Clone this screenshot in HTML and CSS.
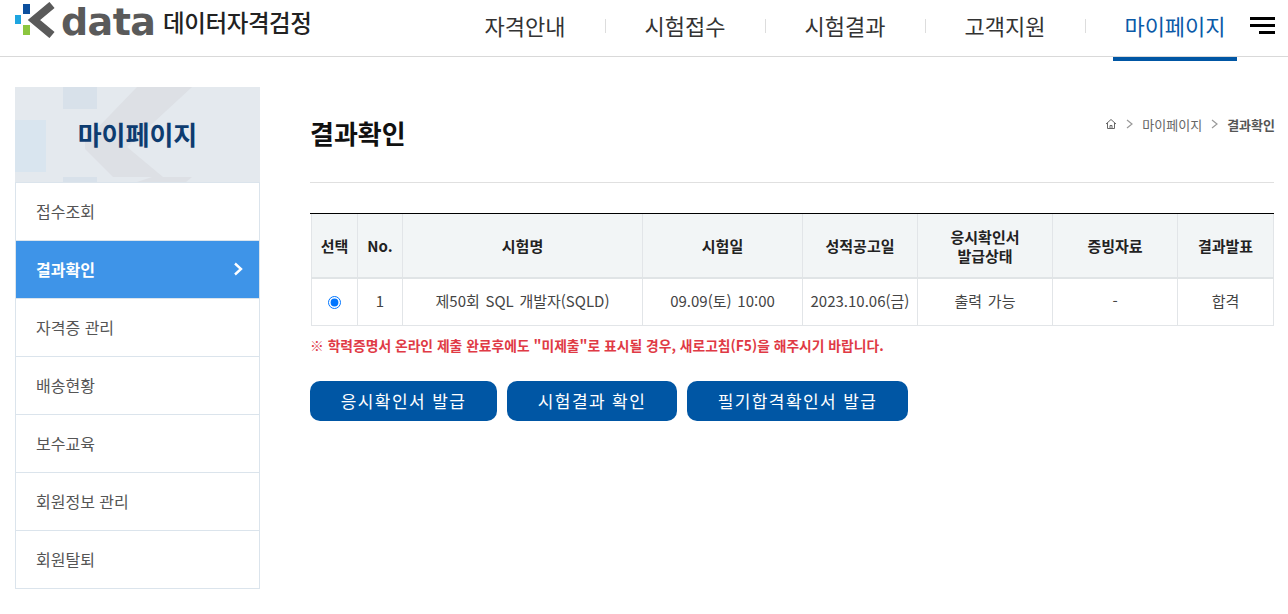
FILE: index.html
```html
<!DOCTYPE html>
<html lang="ko">
<head>
    <meta charset="UTF-8">
    <title>결과확인 - 데이터자격검정</title>
    <link rel="stylesheet" href="styles.css">
</head>
<body>
    <header class="top">
        <a class="logo" href="#">
            <svg class="logo-mark" width="42" height="36" viewBox="0 0 42 36">
                <rect x="8" y="2" width="7" height="10" fill="#0b4f9e"/>
                <rect x="0" y="13" width="6" height="9" fill="#1ea5e0"/>
                <rect x="8" y="23" width="7" height="10" fill="#8cc63f"/>
                <polyline points="37,3 19,18 37,33" fill="none" stroke="#5a5a5a" stroke-width="8"/>
            </svg>
            <span class="logo-data">data</span>
            <span class="logo-name">데이터자격검정</span>
        </a>
        <nav class="gnb">
            <a href="#">자격안내</a>
            <a href="#">시험접수</a>
            <a href="#">시험결과</a>
            <a href="#">고객지원</a>
            <a href="#" class="on">마이페이지</a>
        </nav>
        <button class="menu-btn" aria-label="menu"><span></span><span></span><span></span></button>
    </header>

    <div class="wrap">
        <!-- left menu -->
        <aside class="side">
            <div class="side-title">
                <svg class="side-bg" width="245" height="95" viewBox="0 0 245 95">
                    <rect x="48" y="0" width="34" height="22" fill="#d8e1ea"/>
                    <rect x="0" y="33" width="31" height="52" fill="#d9e5ef"/>
                    <rect x="48" y="90" width="34" height="5" fill="#d8e1ea"/>
                    <polygon points="122,0 177,0 112,60 148,90 98,90 70,62 70,54" fill="#dde0e5"/>
                    <polygon points="122,95 137,90 177,90 171,95" fill="#dde0e5"/>
                </svg>
                <h2>마이페이지</h2>
            </div>
            <ul class="side-menu">
                <li><a href="#">접수조회</a></li>
                <li class="on"><a href="#">결과확인
                    <svg width="10" height="14" viewBox="0 0 10 14"><polyline points="2,1.5 8,7 2,12.5" fill="none" stroke="#fff" stroke-width="2.4"/></svg>
                </a></li>
                <li><a href="#">자격증 관리</a></li>
                <li><a href="#">배송현황</a></li>
                <li><a href="#">보수교육</a></li>
                <li><a href="#">회원정보 관리</a></li>
                <li><a href="#">회원탈퇴</a></li>
            </ul>
        </aside>

        <main class="content">
            <div class="title-row">
                <h1>결과확인</h1>
                <div class="crumb">
                    <svg width="12" height="12" viewBox="0 0 12 12"><path d="M1 6 L6 1.5 L11 6 M2.5 5 V10.5 H9.5 V5 M5 10.5 V7.5 H7 V10.5" fill="none" stroke="#666" stroke-width="1"/></svg>
                    <svg class="arr" width="7" height="10" viewBox="0 0 7 10"><polyline points="1,1 6,5 1,9" fill="none" stroke="#999" stroke-width="1.2"/></svg>
                    <span>마이페이지</span>
                    <svg class="arr" width="7" height="10" viewBox="0 0 7 10"><polyline points="1,1 6,5 1,9" fill="none" stroke="#999" stroke-width="1.2"/></svg>
                    <strong>결과확인</strong>
                </div>
            </div>

            <div class="result-wrap">
                <table class="result">
                    <colgroup>
                        <col class="c1"><col class="c2"><col class="c3"><col class="c4"><col class="c5"><col class="c6"><col class="c7"><col class="c8">
                    </colgroup>
                    <thead>
                        <tr>
                            <th>선택</th>
                            <th>No.</th>
                            <th>시험명</th>
                            <th>시험일</th>
                            <th>성적공고일</th>
                            <th>응시확인서<br>발급상태</th>
                            <th>증빙자료</th>
                            <th>결과발표</th>
                        </tr>
                    </thead>
                    <tbody>
                        <tr>
                            <td><input type="radio" name="sel" checked></td>
                            <td>1</td>
                            <td>제50회 SQL 개발자(SQLD)</td>
                            <td>09.09(토) 10:00</td>
                            <td>2023.10.06(금)</td>
                            <td>출력 가능</td>
                            <td>-</td>
                            <td>합격</td>
                        </tr>
                    </tbody>
                </table>
            </div>

            <p class="notice">※ 학력증명서 온라인 제출 완료후에도 "미제출"로 표시될 경우, 새로고침(F5)을 해주시기 바랍니다.</p>

            <div class="btns">
                <a href="#" class="btn b1">응시확인서 발급</a>
                <a href="#" class="btn b2">시험결과 확인</a>
                <a href="#" class="btn b3">필기합격확인서 발급</a>
            </div>
        </main>
    </div>
</body>
</html>
```

FILE: styles.css
```css
* {
    box-sizing: border-box;
}
html, body {
    margin: 0;
    padding: 0;
    height: 614px;
    overflow: hidden;
}
body {
    background: #fff;
    color: #333;
    font-family: "Noto Sans CJK KR", "Noto Sans", sans-serif;
    font-size: 15px;
}
a {
    color: inherit;
    text-decoration: none;
}
.top {
    height: 57px;
    display: flex;
    align-items: flex-start;
    border-bottom: 1px solid #d9d9d9;
    padding-left: 15px;
}
.logo {
    display: flex;
    align-items: flex-start;
    height: 44px;
}
.logo-mark {
    margin-top: 2px;
}
.logo-data {
    font-family: "DejaVu Sans", sans-serif;
    font-size: 38px;
    font-weight: 700;
    line-height: 44px;
    color: #5a5a5a;
    margin-left: 4px;
    width: 92px;
    letter-spacing: -0.6px;
}
.logo-name {
    font-size: 23.5px;
    font-weight: 500;
    line-height: 45px;
    letter-spacing: -0.4px;
    color: #222;
    margin-left: 10px;
}
.gnb {
    display: flex;
    margin-left: auto;
}
.gnb a {
    width: 160px;
    height: 61px;
    line-height: 51px;
    font-size: 22px;
    text-align: center;
    color: #333;
    position: relative;
}
.gnb a + a::before {
    content: "";
    position: absolute;
    left: 0;
    top: 19px;
    width: 1px;
    height: 14px;
    background: #ddd;
}
.gnb a.on {
    width: 150px;
    margin-left: 15px;
    color: #0b5aa8;
}
.gnb a.on::before {
    left: -15px;
}
.gnb a.on::after {
    content: "";
    position: absolute;
    left: 13px;
    bottom: 0;
    width: 124px;
    height: 4px;
    background: #0056a4;
}
.menu-btn {
    width: 25px;
    margin: 17px 13px 0 0;
    padding: 0;
    border: 0;
    background: none;
    display: flex;
    flex-direction: column;
    align-items: flex-end;
    gap: 4px;
}
.menu-btn span {
    display: block;
    width: 25px;
    height: 3px;
    background: #000;
}
.menu-btn span:last-child {
    width: 16px;
}
.wrap {
    display: flex;
    padding: 30px 14px 0 15px;
}
.side {
    width: 245px;
    flex: none;
}
.side-title {
    height: 95px;
    background: #e4e9ee;
    position: relative;
    overflow: hidden;
    text-align: center;
}
.side-bg {
    position: absolute;
    left: 0;
    top: 0;
}
.side-title h2 {
    position: relative;
    margin: 0;
    font-size: 26px;
    font-weight: 700;
    line-height: 94px;
    color: #0d3c70;
}
.side-menu {
    list-style: none;
    margin: 0;
    padding: 0;
    border: 1px solid #dbe4ec;
    border-top: 0;
}
.side-menu li {
    height: 58px;
    border-top: 1px solid #dbe4ec;
}
.side-menu a {
    display: flex;
    align-items: center;
    justify-content: space-between;
    height: 100%;
    padding: 0 16px 1px 20px;
    font-size: 16px;
    color: #555;
}
.side-menu li.on {
    background: #3e94e8;
}
.side-menu li.on a {
    color: #fff;
    font-weight: 700;
}
.content {
    margin-left: 50px;
    flex: 1;
}
.title-row {
    height: 96px;
    display: flex;
    justify-content: space-between;
    border-bottom: 1px solid #e0e0e0;
}
.title-row h1 {
    margin: 0;
    font-size: 26px;
    font-weight: 700;
    line-height: 92px;
    color: #111;
}
.crumb {
    display: flex;
    align-items: center;
    gap: 9px;
    height: 74px;
    margin-right: -1px;
    font-size: 13px;
    color: #666;
}
.crumb strong {
    color: #555;
}
.result-wrap {
    margin-top: 30px;
    border-top: 1px solid #000;
    padding-left: 1px;
}
.result {
    width: 962px;
    border-collapse: collapse;
    table-layout: fixed;
    text-align: center;
}
.c1 { width: 46px; }
.c2 { width: 45px; }
.c3 { width: 240px; }
.c4 { width: 160px; }
.c5 { width: 115px; }
.c6 { width: 135px; }
.c7 { width: 125px; }
.c8 { width: 96px; }
.result th, .result td {
    border: 1px solid #e2e5e8;
    padding: 0;
    font-size: 15px;
}
.result th {
    height: 64px;
    line-height: 19px;
    background: #f2f5f6;
    border-top: 0;
    border-bottom: 2px solid #e0e4e6;
    font-weight: 700;
    color: #222;
}
.result td {
    height: 47px;
    padding-bottom: 2px;
    color: #444;
    word-spacing: 1.5px;
}
.result input {
    margin: 0 0 1px;
    width: 13px;
    height: 13px;
    vertical-align: middle;
}
.notice {
    margin: 9px 0 0 0;
    line-height: 20px;
    font-size: 13.8px;
    font-weight: 700;
    color: #e03a45;
}
.btns {
    display: flex;
    gap: 10px;
    margin-top: 26px;
}
.btn {
    height: 40px;
    line-height: 39px;
    border-radius: 10px;
    background: #0056a4;
    color: #fff;
    font-size: 17px;
    text-align: center;
    letter-spacing: 1.4px;
}
.b1 { width: 187px; }
.b2 { width: 170px; }
.b3 { width: 221px; }
```
